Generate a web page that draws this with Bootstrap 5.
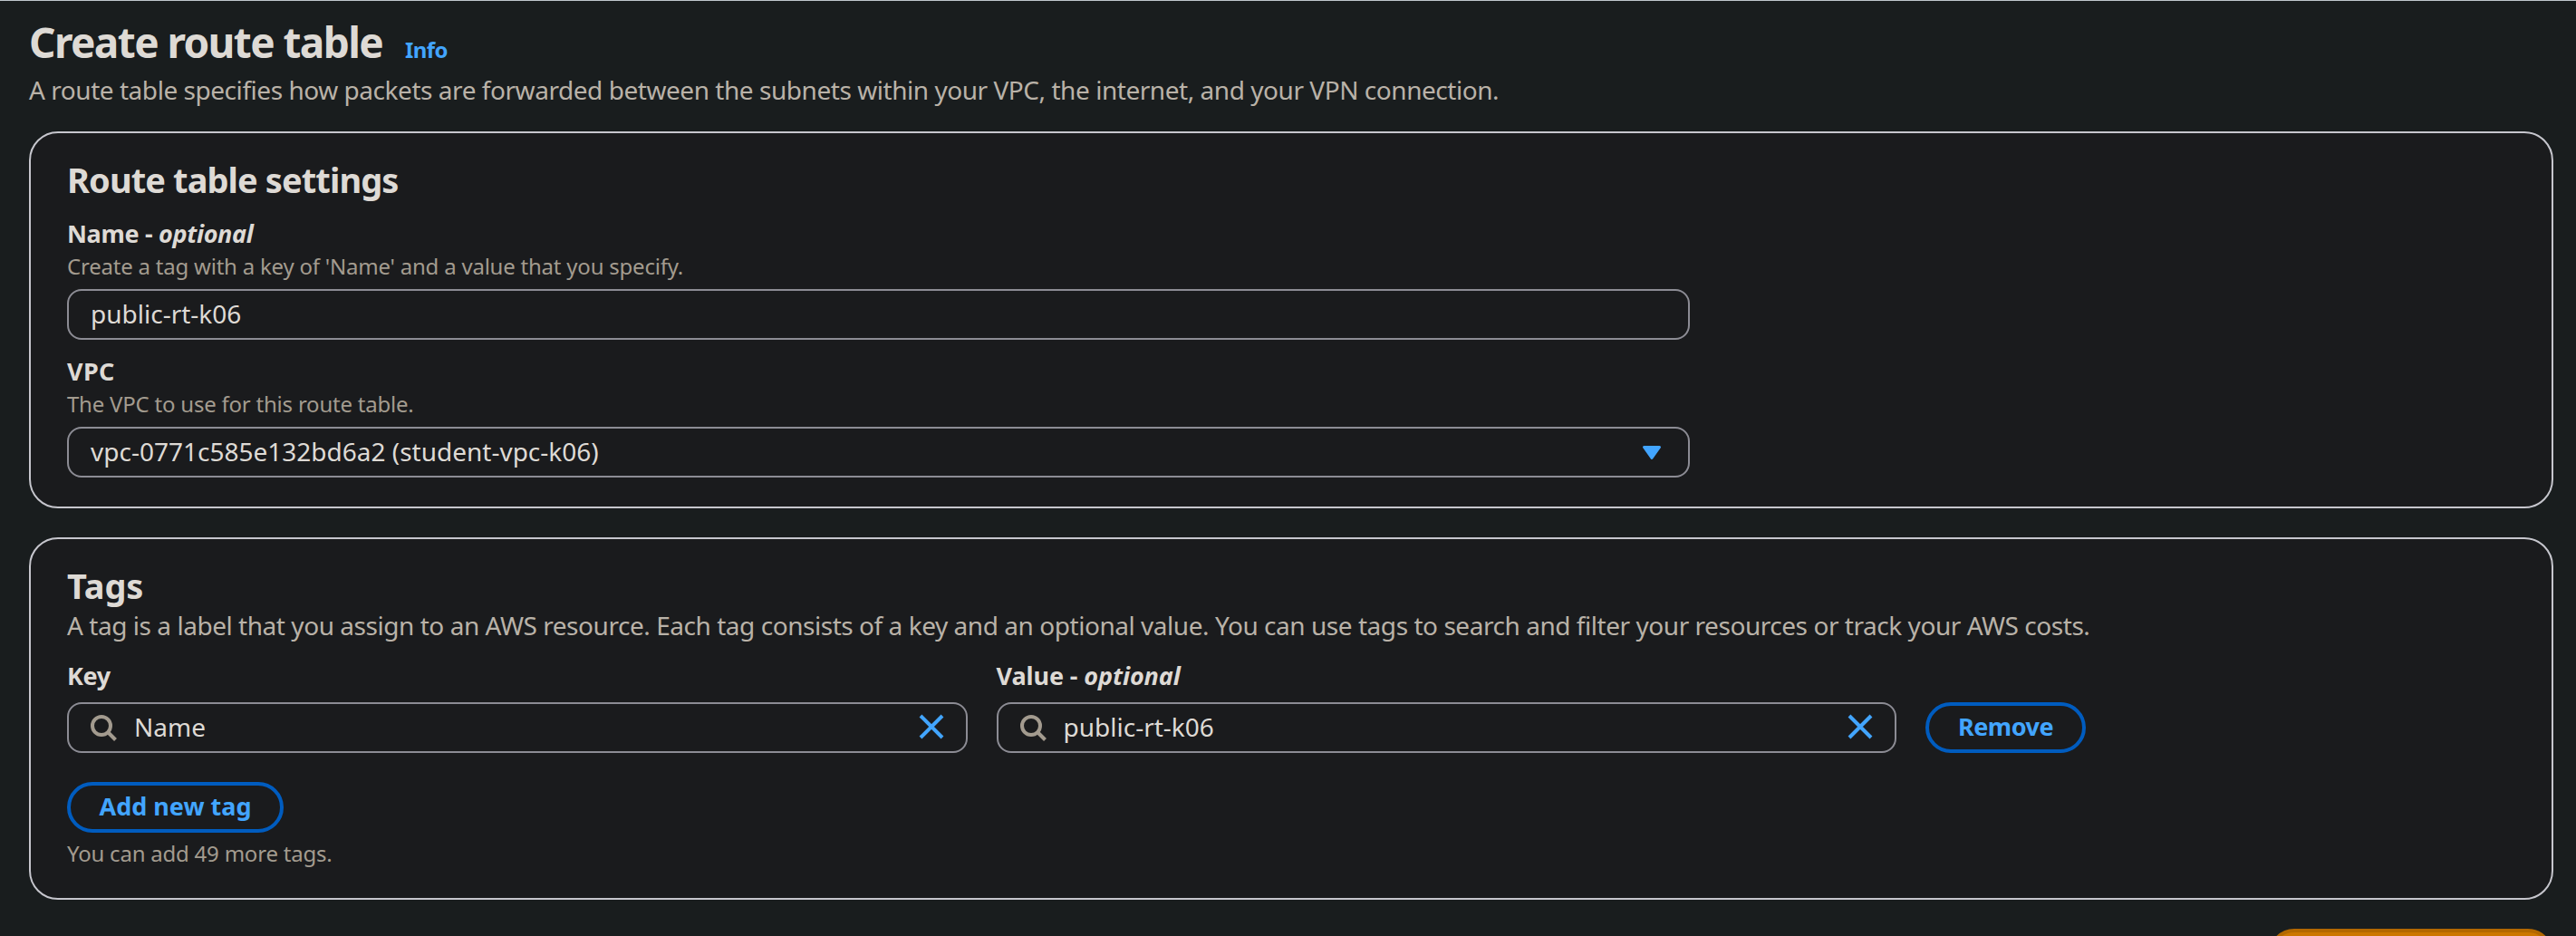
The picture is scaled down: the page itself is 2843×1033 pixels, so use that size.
<!DOCTYPE html>
<html lang="en" data-bs-theme="dark">
<head>
<meta charset="utf-8">
<meta name="viewport" content="width=device-width, initial-scale=1">
<title>Create route table</title>
<link href="https://cdn.jsdelivr.net/npm/bootstrap@5.3.0/dist/css/bootstrap.min.css" rel="stylesheet">
<style>
  body { background: #191d1e; color: #dedad5; font-family: "Noto Sans", sans-serif; font-size: 28px; line-height: 40px; height: 1033px; overflow: hidden; border-top: 1px solid #c0c7cd; }
  .page-wrap { padding: 15px 25px 0 32px; }
  h1 { font-size: 46px; line-height: 60px; font-weight: 700; letter-spacing: -1.6px; color: #dedad5; margin: 0; width: 415px; white-space: nowrap; }
  h2 { font-size: 38px; line-height: 48px; font-weight: 700; letter-spacing: -.9px; color: #dedad5; margin: 0; }
  h2.tags-title { letter-spacing: -.1px; }
  .info-link { font-size: 24px; font-weight: 700; color: #42a5ff; line-height: 32px; letter-spacing: -.6px; }
  .intro { color: #b9b2a8; white-space: nowrap; letter-spacing: -.455px; margin: 0; }
  .page-intro { margin: 3px 0 26px; }
  .panel { background: #1a1b1d; border: 2px solid #c6c6cd; border-radius: 32px; padding: 27px 40px 32px; }
  .settings-panel { height: 416px; margin-bottom: 32px; }
  .tags-panel { height: 400px; margin-bottom: 32px; }
  .hint { font-size: 24px; line-height: 32px; color: #a39b8f; white-space: nowrap; letter-spacing: -.22px; }
  .field-label { font-size: 27px; font-weight: 700; margin: 0; display: block; white-space: nowrap; letter-spacing: -.33px; }
  .label-vpc { letter-spacing: .4px; }
  .label-value { letter-spacing: -.1px; }
  .settings-fields { width: 1791px; padding-top: 16px; gap: 15px; }
  .field-box { height: 56px; border: 2px solid #8c8c94; border-radius: 16px; background: #1a1b1d; color: #dedad5; white-space: nowrap; padding: 0 24px 2px; margin-top: 9px; }
  .search-box span { margin-left: 16px; }
  .icon-search { margin-top: 2px; }
  .icon-caret { margin-top: 3px; }
  .tag-row { gap: 32px; }
  .tag-col { width: 993.5px; }
  .btn-pill { height: 56px; border: 4px solid #005cbf; border-radius: 28px; color: #42a5ff; font-size: 27px; line-height: 40px; font-weight: 700; padding: 3px 0 5px; white-space: nowrap; text-align: center; }
  .btn-add { width: 239px; margin: 32px 0 7px; }
  .btn-remove { width: 177px; letter-spacing: -.5px; }
  .btn-create { width: 314px; height: 56px; border: 4px solid #b36800; border-radius: 28px; background: #cc7700; padding: 0; }
</style>
</head>
<body>
<main class="page-wrap">
  <header>
    <div class="d-flex align-items-baseline">
      <h1>Create route table</h1>
      <a class="info-link text-decoration-none">Info</a>
    </div>
    <p class="intro page-intro">A route table specifies how packets are forwarded between the subnets within your VPC, the internet, and your VPN connection.</p>
  </header>

  <section class="panel settings-panel">
    <h2>Route table settings</h2>
    <div class="settings-fields d-flex flex-column">
      <div>
        <label class="field-label">Name - <em>optional</em></label>
        <div class="hint">Create a tag with a key of 'Name' and a value that you specify.</div>
        <div class="field-box d-flex align-items-center">public-rt-k06</div>
      </div>
      <div>
        <label class="field-label label-vpc">VPC</label>
        <div class="hint">The VPC to use for this route table.</div>
        <div class="field-box d-flex align-items-center justify-content-between">
          <span>vpc-0771c585e132bd6a2 (student-vpc-k06)</span>
          <svg class="icon-caret me-1" width="24" height="20" viewBox="0 0 24 20"><path d="M3.500 3.500h17L12 15.500z" fill="#42a5ff" stroke="#42a5ff" stroke-width="3" stroke-linejoin="round"/></svg>
        </div>
      </div>
    </div>
  </section>

  <section class="panel tags-panel">
    <h2 class="tags-title">Tags</h2>
    <p class="intro">A tag is a label that you assign to an AWS resource. Each tag consists of a key and an optional value. You can use tags to search and filter your resources or track your AWS costs.</p>
    <div class="tag-row d-flex align-items-end mt-3">
      <div class="tag-col">
        <label class="field-label">Key</label>
        <div class="field-box search-box d-flex align-items-center">
          <svg class="icon-search" width="32" height="32" viewBox="0 0 32 32" fill="none" stroke="#a39b8f" stroke-width="4"><circle cx="12" cy="14" r="10"/><path d="M19 21l8.500 8.500"/></svg>
          <span>Name</span>
          <svg class="ms-auto" width="28" height="28" viewBox="0 0 28 28" fill="none" stroke="#42a5ff" stroke-width="4"><path d="M2 2l24 24M26 2L2 26"/></svg>
        </div>
      </div>
      <div class="tag-col">
        <label class="field-label label-value">Value - <em>optional</em></label>
        <div class="field-box search-box d-flex align-items-center">
          <svg class="icon-search" width="32" height="32" viewBox="0 0 32 32" fill="none" stroke="#a39b8f" stroke-width="4"><circle cx="12" cy="14" r="10"/><path d="M19 21l8.500 8.500"/></svg>
          <span>public-rt-k06</span>
          <svg class="ms-auto" width="28" height="28" viewBox="0 0 28 28" fill="none" stroke="#42a5ff" stroke-width="4"><path d="M2 2l24 24M26 2L2 26"/></svg>
        </div>
      </div>
      <button class="btn btn-pill btn-remove">Remove</button>
    </div>
    <button class="btn btn-pill btn-add d-block">Add new tag</button>
    <div class="hint">You can add 49 more tags.</div>
  </section>

  <div class="d-flex justify-content-end"><button class="btn btn-create"></button></div>
</main>
<script src="https://cdn.jsdelivr.net/npm/bootstrap@5.3.0/dist/js/bootstrap.bundle.min.js"></script>
</body>
</html>
